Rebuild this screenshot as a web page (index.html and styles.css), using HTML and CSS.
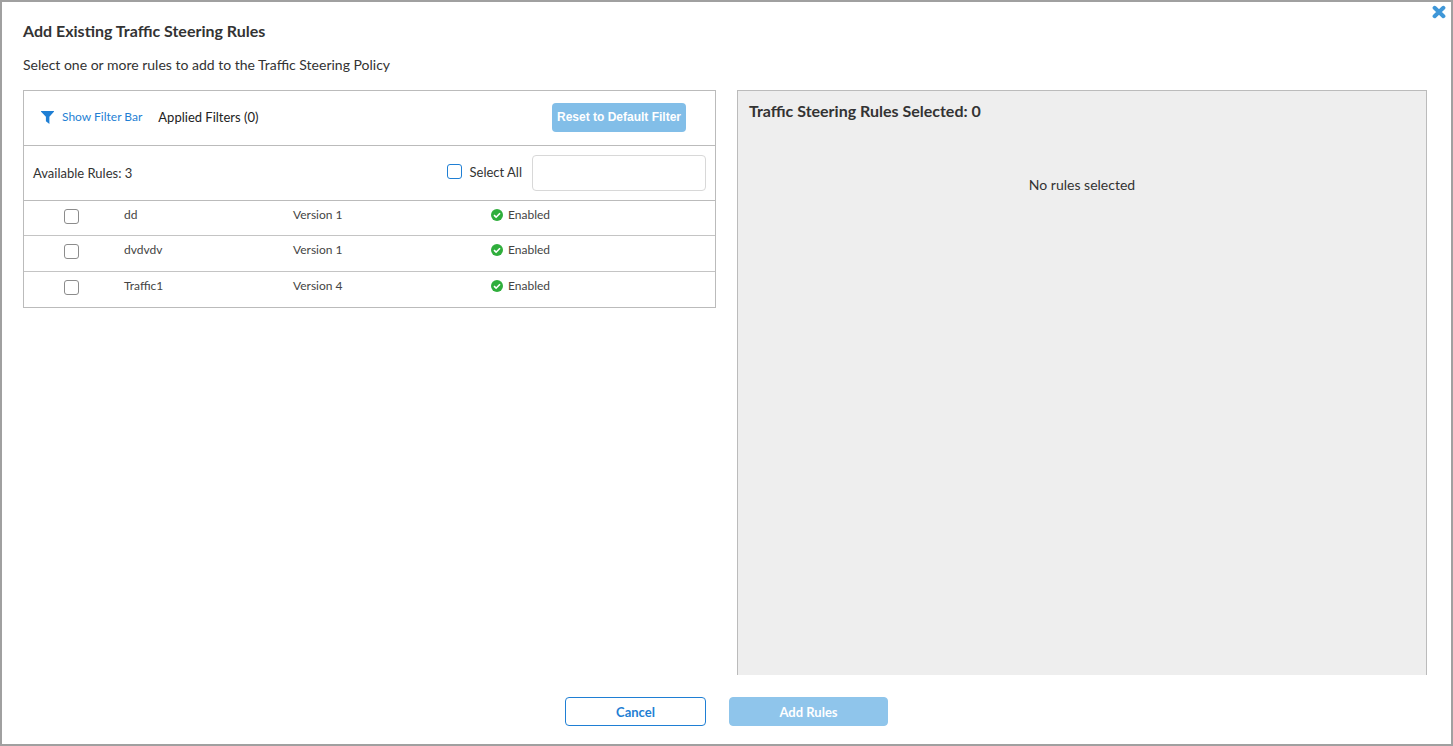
FILE: index.html
```html
<!DOCTYPE html>
<html lang="en">
<head>
<meta charset="utf-8">
<meta name="viewport" content="width=device-width, initial-scale=1">
<title>Add Existing Traffic Steering Rules</title>
<link rel="stylesheet" href="styles.css">
</head>
<body>
<main class="dialog" role="dialog" aria-labelledby="dialog-title">
  <button class="close" type="button" aria-label="Close">
    <svg viewBox="0 0 14 14" width="14" height="14" aria-hidden="true"><path d="M2.6 2.8l8.8 8.4M11.4 2.8l-8.8 8.4" fill="none" stroke="#3f97d8" stroke-width="4" stroke-linecap="round"/></svg>
  </button>
  <h1 class="title" id="dialog-title">Add Existing Traffic Steering Rules</h1>
  <p class="intro">Select one or more rules to add to the Traffic Steering Policy</p>

  <div class="columns">
    <section class="available">
      <div class="filter-bar">
        <a class="filter-link" href="#">
          <svg viewBox="0 0 13 13" width="13" height="13" aria-hidden="true"><path d="M.3 0h12.4c.3 0 .4.4.2.7L8.4 5.8V13L4.9 10.3V5.8L.1.7C-.1.4 0 0 .3 0z" fill="#1f7fd4"/></svg>
          <span>Show Filter Bar</span>
        </a>
        <span class="applied">Applied Filters (0)</span>
        <button class="reset" type="button">Reset to Default Filter</button>
      </div>
      <div class="toolbar">
        <span class="count">Available Rules: 3</span>
        <label class="select-all"><input class="check check-blue" type="checkbox"><span>Select All</span></label>
        <input class="search" type="text" aria-label="Search rules">
      </div>
      <table class="rules">
        <colgroup><col class="col-check"><col class="col-name"><col class="col-version"><col class="col-status"></colgroup>
        <tbody>
          <tr>
            <td class="pick"><input class="check" type="checkbox" aria-label="dd"></td>
            <td>dd</td>
            <td>Version 1</td>
            <td><span class="status"><svg viewBox="0 0 12 12" width="12" height="12" aria-hidden="true"><circle cx="6" cy="6" r="6" fill="#2fae3c"/><path d="M3 6.2l2.1 2 3.9-4" fill="none" stroke="#fff" stroke-width="1.6"/></svg>Enabled</span></td>
          </tr>
          <tr>
            <td class="pick"><input class="check" type="checkbox" aria-label="dvdvdv"></td>
            <td>dvdvdv</td>
            <td>Version 1</td>
            <td><span class="status"><svg viewBox="0 0 12 12" width="12" height="12" aria-hidden="true"><circle cx="6" cy="6" r="6" fill="#2fae3c"/><path d="M3 6.2l2.1 2 3.9-4" fill="none" stroke="#fff" stroke-width="1.6"/></svg>Enabled</span></td>
          </tr>
          <tr>
            <td class="pick"><input class="check" type="checkbox" aria-label="Traffic1"></td>
            <td>Traffic1</td>
            <td>Version 4</td>
            <td><span class="status"><svg viewBox="0 0 12 12" width="12" height="12" aria-hidden="true"><circle cx="6" cy="6" r="6" fill="#2fae3c"/><path d="M3 6.2l2.1 2 3.9-4" fill="none" stroke="#fff" stroke-width="1.6"/></svg>Enabled</span></td>
          </tr>
        </tbody>
      </table>
    </section>

    <section class="selected">
      <h2 class="selected-title">Traffic Steering Rules Selected: 0</h2>
      <p class="empty">No rules selected</p>
    </section>
  </div>

  <footer class="actions">
    <button class="btn btn-cancel" type="button">Cancel</button>
    <button class="btn btn-add" type="button">Add Rules</button>
  </footer>
</main>
</body>
</html>
```
FILE: styles.css
```css
* {
  box-sizing: border-box;
}

body {
  margin: 0;
  background: #fff;
  color: #333;
  font-family: Lato, "Liberation Sans", sans-serif;
  font-size: 13px;
  line-height: 16px;
}

button,
input {
  font: inherit;
}

.dialog {
  position: relative;
  display: flex;
  flex-direction: column;
  min-height: 100vh;
  padding: 19px 24px 18px 21px;
  border: 2px solid #a0a0a0;
}

.close {
  position: absolute;
  top: 3px;
  right: 5px;
  padding: 0;
  border: 0;
  background: none;
  line-height: 0;
  cursor: pointer;
}

.title,
.selected-title {
  margin: 0;
  font-size: 16px;
  line-height: 20px;
  font-weight: 700;
}

.intro {
  margin: 14px 0 15px;
  font-size: 14px;
  line-height: 20px;
}

.columns {
  display: grid;
  flex: 1;
  grid-template-columns: 693fr 690fr;
  gap: 21px;
}

.available {
  align-self: start;
  border: 1px solid #bbb;
}

.filter-bar,
.toolbar {
  display: flex;
  align-items: center;
  height: 55px;
  border-bottom: 1px solid #bbb;
}

.filter-bar {
  padding: 0 29px 2px 17px;
}

.filter-link {
  display: flex;
  align-items: center;
  gap: 8px;
  color: #1f7fd4;
  font-size: 12px;
  text-decoration: none;
}

.applied {
  margin-left: 16px;
  color: #222;
}

.reset {
  height: 29px;
  margin-left: auto;
  padding: 0 5px;
  border: 0;
  border-radius: 4px;
  background: #82bee8;
  color: #fff;
  font-family: "Liberation Sans", sans-serif;
  font-size: 12px;
  font-weight: 700;
}

.toolbar {
  padding: 0 9px;
}

.select-all {
  display: flex;
  align-items: center;
  gap: 8px;
  margin: 0 10px 0 auto;
  padding-bottom: 3px;
}

.check {
  appearance: none;
  display: block;
  width: 15px;
  height: 15px;
  margin: 0;
  border: 1px solid #8c8c8c;
  border-radius: 3px;
  background: #fff;
}

.check:checked {
  background: #1f7fd4;
}

.check-blue {
  border-color: #1f7fd4;
}

.search {
  width: 174px;
  height: 36px;
  padding: 0 10px;
  border: 1px solid #d8d8d8;
  border-radius: 4px;
  background: #fff;
}

.rules {
  width: 100%;
  border-collapse: separate;
  border-spacing: 0;
  table-layout: fixed;
  color: #444;
  font-size: 12px;
}

.col-check {
  width: 100px;
}

.col-name {
  width: 169px;
}

.col-version {
  width: 198px;
}

.rules td {
  height: 34px;
  padding: 6px 0 0;
  vertical-align: top;
}

.rules tr + tr td {
  height: 36px;
  border-top: 1px solid #c4c4c4;
}

.rules .pick {
  padding: 8px 0 0 40px;
}

.status {
  display: flex;
  align-items: center;
  gap: 5px;
}

.selected {
  padding: 10px 11px;
  border: 1px solid #bbb;
  border-bottom: 0;
  background: #eee;
}

.empty {
  margin: 54px 0 0;
  font-size: 14px;
  line-height: 20px;
  text-align: center;
}

.actions {
  display: flex;
  justify-content: center;
  gap: 23px;
  margin: 22px 0 0 3px;
}

.btn {
  width: 159px;
  height: 29px;
  padding: 0;
  border: 1px solid #8fc5eb;
  border-radius: 4px;
  font-weight: 700;
}

.btn-cancel {
  width: 141px;
  border-color: #1f7fd4;
  background: #fff;
  color: #1f7fd4;
}

.btn-add {
  background: #8fc5eb;
  color: #fff;
}
```
